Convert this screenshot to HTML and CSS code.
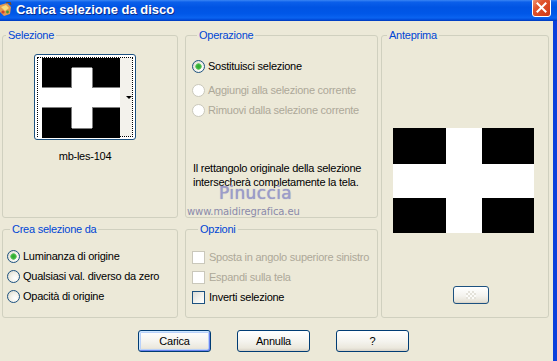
FILE: index.html
```html
<!DOCTYPE html>
<html lang="it">
<head>
    <meta charset="UTF-8">
    <title>Carica selezione da disco</title>
    <link rel="stylesheet" href="styles.css">
</head>
<body>
    <div class="window">
        <div class="titlebar">
            <svg class="app-icon" width="12" height="15" viewBox="0 0 12 15">
                <path d="M0 3 L7 1 L11 5 L10 12 L4 14 L0 10 Z" fill="#e39a52"/>
                <path d="M1 5 L6 3 L9 6 L5 9 Z" fill="#f8dc80"/>
                <circle cx="3" cy="10" r="1.6" fill="#d2452b"/>
                <circle cx="7.5" cy="10" r="1.4" fill="#3b9c3b"/>
                <path d="M6 1 L10 0 L11 3" stroke="#7a4a20" stroke-width="1.2" fill="none"/>
            </svg>
            <span class="title">Carica selezione da disco</span>
            <span class="close">
                <svg width="11" height="11" viewBox="0 0 11 11">
                    <path d="M1.5 1.5 L9.5 9.5 M9.5 1.5 L1.5 9.5" stroke="#fff" stroke-width="2" stroke-linecap="square"/>
                </svg>
            </span>
        </div>

        <div class="client">
            <div class="groups">
                <fieldset class="group g-sel">
                    <legend>Selezione</legend>
                    <div class="thumb">
                        <div class="thumb-focus">
                            <svg class="thumb-img" width="82" height="80" viewBox="0 0 82 80">
                                <rect x="0" y="0" width="82" height="80" fill="#fff"/>
                                <rect x="4" y="0" width="78" height="30" fill="#000"/>
                                <rect x="4" y="49" width="78" height="31" fill="#000"/>
                                <rect x="34" y="10" width="20" height="60" fill="#fff"/>
                                <path d="M33.5 10 V30 M54.5 10 V30 M33.5 49 V70 M54.5 49 V70 M34 9.5 H54 M34 70.5 H54 M4 29.5 H34 M54 29.5 H82 M4 49.5 H34 M54 49.5 H82" stroke="#7d7d7d" stroke-width="1"/>
                            </svg>
                            <span class="thumb-drop"><i class="arrow"></i></span>
                        </div>
                    </div>
                    <div class="thumb-name">mb-les-104</div>
                </fieldset>

                <fieldset class="group g-op">
                    <legend>Operazione</legend>
                    <label class="opt spaced"><input type="radio" name="op" checked>Sostituisci selezione</label>
                    <label class="opt disabled"><input type="radio" name="op" disabled>Aggiungi alla selezione corrente</label>
                    <label class="opt disabled"><input type="radio" name="op" disabled>Rimuovi dalla selezione corrente</label>
                    <p class="note">Il rettangolo originale della selezione<br>intersecherà completamente la tela.</p>
                </fieldset>

                <fieldset class="group g-prev">
                    <legend>Anteprima</legend>
                    <svg class="preview" width="141" height="105" viewBox="0 0 141 105">
                        <rect x="0" y="0" width="141" height="105" fill="#000"/>
                        <rect x="53" y="0" width="36" height="105" fill="#fff"/>
                        <rect x="0" y="36" width="141" height="34" fill="#fff"/>
                    </svg>
                    <button class="mini"><span class="checker"></span></button>
                </fieldset>

                <fieldset class="group g-crea">
                    <legend>Crea selezione da</legend>
                    <label class="opt"><input type="radio" name="src" checked>Luminanza di origine</label>
                    <label class="opt"><input type="radio" name="src">Qualsiasi val. diverso da zero</label>
                    <label class="opt"><input type="radio" name="src">Opacità di origine</label>
                </fieldset>

                <fieldset class="group g-opts">
                    <legend>Opzioni</legend>
                    <label class="opt check disabled"><input type="checkbox" disabled>Sposta in angolo superiore sinistro</label>
                    <label class="opt check disabled"><input type="checkbox" disabled>Espandi sulla tela</label>
                    <label class="opt check"><input type="checkbox">Inverti selezione</label>
                </fieldset>
            </div>

            <div class="actions">
                <button class="btn default">Carica</button>
                <button class="btn">Annulla</button>
                <button class="btn">?</button>
            </div>
        </div>

        <div class="watermark">
            <div class="wm-name">Pinuccia</div>
            <div class="wm-site">www.maidiregrafica.eu</div>
        </div>
    </div>
</body>
</html>
```

FILE: styles.css
```css
body {
    margin: 0;
    background: #ece9d8;
    font-family: "Liberation Sans", Arial, sans-serif;
    font-size: 11px;
    letter-spacing: -0.25px;
    color: #000;
    overflow: hidden;
}
.window {
    position: relative;
    width: 557px;
    height: 361px;
    background: #ece9d8;
    display: flex;
    flex-direction: column;
}

/* title bar */
.titlebar {
    flex: none;
    height: 21px;
    display: flex;
    align-items: flex-start;
    background: linear-gradient(180deg, #3a86f4 0%, #0b5fea 10%, #0054e3 35%, #0057e8 65%, #0a63f0 85%, #0049d8 95%, #0037b5 100%);
}
.app-icon {
    margin-top: 2px;
    flex: none;
}
.title {
    margin: 3px 0 0 4px;
    font-size: 13px;
    line-height: 14px;
    font-weight: bold;
    letter-spacing: 0;
    color: #fff;
    text-shadow: 1px 1px 0 #0a2a8a;
}
.close {
    margin: -2px 6px 0 auto;
    width: 19px;
    height: 19px;
    box-sizing: border-box;
    border: 1px solid #fff;
    border-radius: 3px;
    background: linear-gradient(135deg, #f0997a 0%, #e0552e 35%, #d4401c 80%, #c8391a 100%);
    display: flex;
    align-items: center;
    justify-content: center;
}

/* client area */
.client {
    flex: 1;
    border-right: 4px solid #0a3fdc;
    padding: 8px 0 0 2px;
}
.groups {
    display: grid;
    grid-template-columns: 183px 196px 168px;
    grid-template-rows: 189px 95px;
    row-gap: 5px;
}
.group {
    margin: 0;
    padding: 0;
    min-width: 0;
    border: 1px solid #d0d0bf;
    border-radius: 3px;
    display: flex;
    flex-direction: column;
    align-items: flex-start;
}
.group legend {
    padding: 0 2px;
    margin-left: 5px;
    line-height: 12px;
    color: #0046d5;
}
.g-sel { grid-column: 1; grid-row: 1; margin-right: 7px; }
.g-op { grid-column: 2; grid-row: 1; margin-right: 3px; padding: 17px 0 0 6px; }
.g-prev { grid-column: 3; grid-row: 1 / 3; }
.g-crea { grid-column: 1; grid-row: 2; margin-right: 7px; padding: 13px 0 0 4px; gap: 4px; }
.g-opts { grid-column: 2; grid-row: 2; margin-right: 3px; padding: 14px 0 0 6px; gap: 4px; }
.g-sel legend,
.g-crea legend { margin-left: 3px; }
.g-opts legend { margin-left: 6px; }

/* selection thumbnail */
.thumb {
    margin: 13px 0 0 31px;
    width: 102px;
    height: 86px;
    box-sizing: border-box;
    border: 1px solid #1c5180;
    border-radius: 3px;
    background: #fff;
    padding: 2px;
}
.thumb-focus {
    height: 100%;
    box-sizing: border-box;
    border: 1px dotted #000;
    display: flex;
}
.thumb-img {
    display: block;
    flex: none;
}
.thumb-drop {
    flex: 1;
    background: #f3f2ec;
    display: flex;
    align-items: center;
    justify-content: flex-end;
}
.arrow {
    width: 0;
    height: 0;
    border-left: 3px solid transparent;
    border-right: 3px solid transparent;
    border-top: 3px solid #000;
}
.thumb-name {
    margin: 10px 0 0 31px;
    width: 102px;
    text-align: center;
    line-height: 12px;
}

/* radios and checkboxes */
.opt {
    display: flex;
    align-items: center;
    gap: 3px;
    height: 16px;
    white-space: nowrap;
}
.g-op .opt { margin-bottom: 4px; }
.g-op .opt.spaced { margin-bottom: 8px; }
.opt.check { gap: 4px; }
.opt.disabled { color: #aca899; }
.opt input {
    appearance: none;
    -webkit-appearance: none;
    margin: 0;
    width: 13px;
    height: 13px;
    box-sizing: border-box;
    border: 1px solid #1c5180;
    border-radius: 50%;
    background: radial-gradient(circle at 65% 65%, #ffffff 0%, #f2f1ea 45%, #d6d3c4 100%);
    flex: none;
}
.opt input:checked {
    background: radial-gradient(circle at 50% 50%, #2fa82f 0, #3ab53a 2px, #7ccf7c 3px, transparent 3.5px),
        radial-gradient(circle at 65% 65%, #ffffff 0%, #f2f1ea 45%, #d6d3c4 100%);
}
.opt input[type="checkbox"] {
    border-radius: 0;
    background: linear-gradient(135deg, #dcdcd7 0%, #f4f4f0 60%, #ffffff 100%);
}
.opt input:disabled {
    border-color: #cac8bb;
    background: #fff;
}
.note {
    margin: 39px 0 0 1px;
    line-height: 14px;
}

/* preview */
.preview {
    display: block;
    margin: 87px 0 0 11px;
}
.mini {
    margin: 53px 0 0 71px;
    width: 36px;
    height: 18px;
    padding: 0;
    border: 1px solid #1c5180;
    border-radius: 3px;
    background: linear-gradient(#ffffff, #f4f3ee 55%, #e6e3d8 90%, #d6d0c5);
    display: flex;
    align-items: center;
    justify-content: center;
}
.checker {
    width: 10px;
    height: 8px;
    background: repeating-conic-gradient(#e4e2da 0 25%, #fbfbf8 0 50%) 0 0 / 4px 4px;
}

/* dialog buttons */
.actions {
    display: flex;
    gap: 26px;
    margin-top: 12px;
    padding-left: 136px;
}
.btn {
    width: 73px;
    height: 22px;
    padding: 0;
    font: inherit;
    letter-spacing: -0.25px;
    color: #000;
    border: 1px solid #003c74;
    border-radius: 3px;
    background: linear-gradient(#ffffff, #f5f4ef 50%, #ebe8dd 85%, #d6d0c5);
}
.btn.default {
    box-shadow: inset 1px 1px 0 #cee7ff, inset -1px -1px 0 #6982ee, inset 0 0 0 2px #b9d1fa;
}

/* watermark over the dialog */
.watermark {
    position: absolute;
    left: 187px;
    top: 187px;
    pointer-events: none;
}
.wm-name {
    margin-left: 32px;
    font-family: "DejaVu Sans", sans-serif;
    font-size: 17px;
    line-height: 13px;
    letter-spacing: 0.4px;
    color: #9c9cca;
    text-shadow: 0 0 1px #8c8cbc;
}
.wm-site {
    margin-top: 6px;
    font-family: "DejaVu Sans", sans-serif;
    font-size: 10px;
    line-height: 12px;
    letter-spacing: -0.1px;
    color: #8a8aaa;
}
```
